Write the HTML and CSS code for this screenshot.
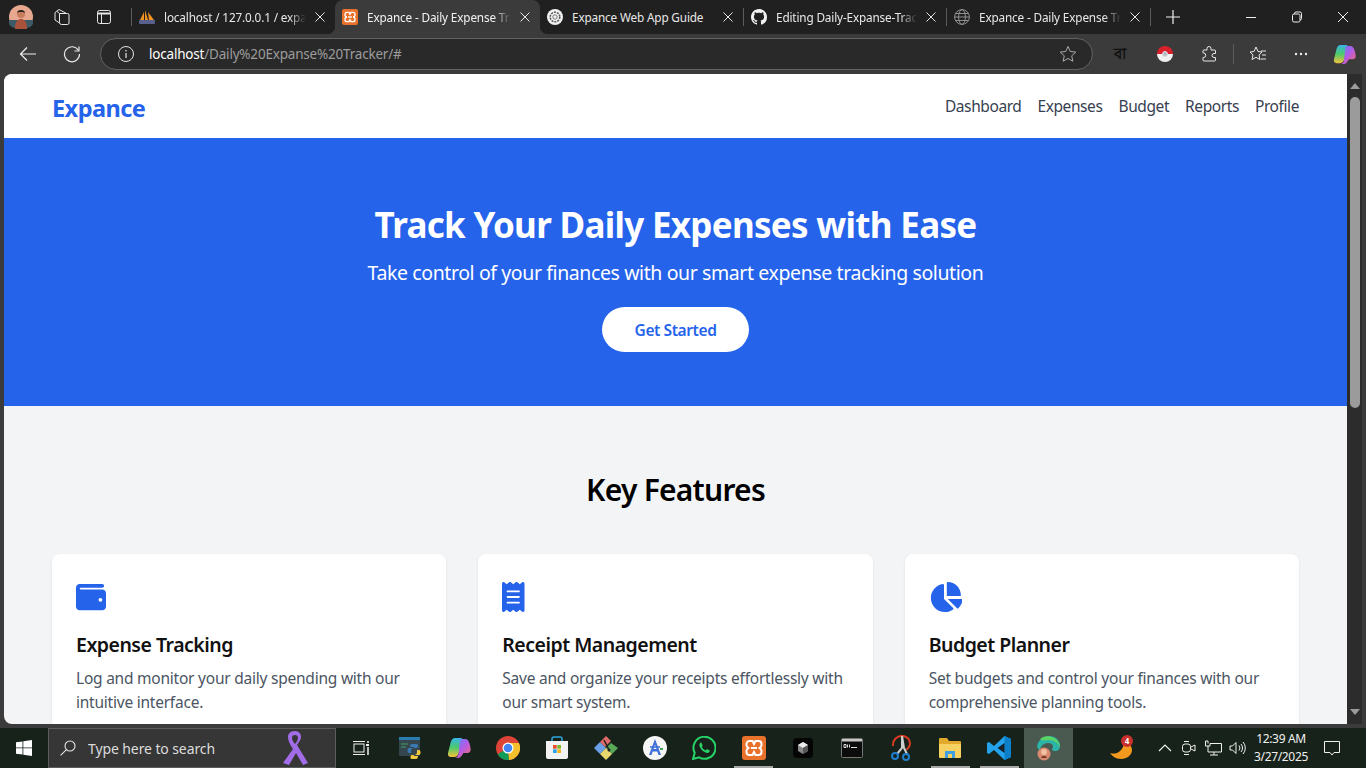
FILE: index.html
```html
<!DOCTYPE html>
<html lang="en">
<head>
<meta charset="utf-8">
<title>Expance - Daily Expense Tracker</title>
<link rel="stylesheet" href="styles.css">
</head>
<body>
<svg class="defs" width="0" height="0" aria-hidden="true">
  <symbol id="xampp" viewBox="0 0 24 24">
    <rect width="24" height="24" rx="3" fill="#e8712b"/>
    <path d="M7.500 5h3l1.500 3 1.500-3h3a3 3 0 0 1 3 3v.5a3 3 0 0 1-3 3.500 3 3 0 0 1 3 3.500v.5a3 3 0 0 1-3 3h-3L12 16l-1.500 3h-3a3 3 0 0 1-3-3v-.5a3 3 0 0 1 3-3.500 3 3 0 0 1-3-3.500V8a3 3 0 0 1 3-3z" fill="none" stroke="#fff" stroke-width="2"/>
    <path d="M9 12h6" stroke="#fff" stroke-width="2"/>
  </symbol>
  <linearGradient id="cpA" x1="0" y1="0" x2="1" y2="1"><stop offset="0" stop-color="#4f8cf5"/><stop offset=".5" stop-color="#b45be8"/><stop offset="1" stop-color="#f36b6a"/></linearGradient>
  <linearGradient id="cpB" x1="0" y1="0" x2="0" y2="1"><stop offset="0" stop-color="#37b4e8"/><stop offset=".5" stop-color="#4ccb6b"/><stop offset="1" stop-color="#f6c23c"/></linearGradient>
  <symbol id="copilot" viewBox="0 0 24 24">
    <path d="M8 2h7l-3 14c-.6 3-2 5-5 5H4c-2.500 0-3.500-2-3-4l2.500-10C4.200 4 5.500 2 8 2z" fill="url(#cpB)"/>
    <path d="M13 3h5c2.500 0 3.800 2 4.500 4.500l1 4.500c.6 3-.5 5-3 5h-4l-2 3c-1 1.500-2.500 2-4 2h-3c2.500 0 3.500-2 4-4z" fill="url(#cpA)"/>
  </symbol>
</svg>

<header class="tabbar">
  <div class="slot s42">
    <svg class="ico" width="24" height="24" viewBox="0 0 24 24"><circle cx="12" cy="12" r="12" fill="#e8a890"/><path d="M0 15h24v3a12 6 0 0 1-24 0z" fill="#3d5a66"/><circle cx="12" cy="9" r="4" fill="#c77c5c"/><path d="M8 8c0-4 8-4 8 0l-2-1h-4z" fill="#2a2020"/><path d="M6 24c0-8 3-10 6-10s6 2 6 10z" fill="#a8523c"/></svg>
  </div>
  <div class="slot s40">
    <svg width="18" height="18" viewBox="0 0 18 18" fill="none" stroke="#e6e6e6"><path d="M6.500 5.500h8a1.500 1.500 0 0 1 1.500 1.500v8a1.500 1.500 0 0 1-1.500 1.500h-6A2 2 0 0 1 6.500 14.500z"/><path d="M6.500 5.500 3.800 3.200 2 4.600v7.400l4.500 3M4 3l2-1.500 7.500 4"/></svg>
  </div>
  <div class="slot s44">
    <svg width="14" height="14" viewBox="0 0 14 14" fill="none" stroke="#e6e6e6"><rect x=".5" y=".5" width="13" height="13" rx="2"/><path d="M.5 3.500h13" stroke-width="2"/><path d="M4.500 3.500v10"/></svg>
  </div>
  <span class="sep first"></span>

  <div class="tab">
    <svg class="favicon" width="16" height="16" viewBox="0 0 16 16"><path d="M1 11 5 3v8zM6 11V1l3 10zM10 11 9 3l6 8z" fill="#f29222"/><rect y="11" width="16" height="4" rx="1" fill="#58608c"/></svg>
    <span class="tab-text">localhost / 127.0.0.1 / expance | phpMyAdmin</span>
    <svg class="close" width="16" height="16" viewBox="0 0 16 16"><path d="M3.500 3.500l9 9m0-9-9 9" stroke="#e6e6e6"/></svg>
  </div>
  <div class="tab active">
    <svg class="favicon" width="16" height="16"><use href="#xampp"/></svg>
    <span class="tab-text">Expance - Daily Expense Tracker</span>
    <svg class="close" width="16" height="16" viewBox="0 0 16 16"><path d="M3.500 3.500l9 9m0-9-9 9" stroke="#e6e6e6"/></svg>
  </div>
  <div class="tab">
    <svg class="favicon" width="16" height="16" viewBox="0 0 16 16"><circle cx="8" cy="8" r="8" fill="#f2f2f2"/><circle cx="8" cy="8" r="4.800" fill="none" stroke="#555" stroke-width="1.500" stroke-dasharray="2 1"/><circle cx="8" cy="8" r="2.200" fill="none" stroke="#777"/></svg>
    <span class="tab-text plain">Expance Web App Guide</span>
    <svg class="close" width="16" height="16" viewBox="0 0 16 16"><path d="M3.500 3.500l9 9m0-9-9 9" stroke="#e6e6e6"/></svg>
  </div>
  <span class="sep"></span>
  <div class="tab narrow">
    <svg class="favicon" width="16" height="16" viewBox="0 0 16 16"><path fill="#f2f2f2" d="M8 0C3.580 0 0 3.580 0 8c0 3.540 2.290 6.530 5.470 7.590.4.070.55-.17.55-.38 0-.19-.01-.82-.01-1.490-2.010.37-2.530-.49-2.690-.94-.09-.23-.48-.94-.82-1.130-.28-.15-.68-.52-.01-.53.630-.01 1.080.58 1.230.82.720 1.210 1.870.87 2.330.66.070-.52.28-.87.51-1.070-1.780-.2-3.640-.89-3.640-3.950 0-.87.310-1.590.820-2.150-.08-.2-.360-1.020.08-2.120 0 0 .67-.21 2.200.82.640-.18 1.320-.27 2-.27s1.360.09 2 .27c1.530-1.040 2.200-.82 2.200-.82.440 1.100.160 1.920.08 2.120.510.560.820 1.270.820 2.150 0 3.070-1.870 3.750-3.650 3.950.29.250.54.730.54 1.480 0 1.070-.01 1.930-.01 2.200 0 .210.150.460.550.380A8.010 8.010 0 0 0 16 8c0-4.420-3.580-8-8-8z"/></svg>
    <span class="tab-text">Editing Daily-Expanse-Tracker/README.md</span>
    <svg class="close" width="16" height="16" viewBox="0 0 16 16"><path d="M3.500 3.500l9 9m0-9-9 9" stroke="#e6e6e6"/></svg>
  </div>
  <span class="sep"></span>
  <div class="tab">
    <svg class="favicon" width="16" height="16" viewBox="0 0 16 16" fill="none" stroke="#9a9a9a" stroke-width=".9"><circle cx="8" cy="8" r="7.400"/><ellipse cx="8" cy="8" rx="3.400" ry="7.400"/><path d="M.6 8h14.800M1.600 4.500h12.800M1.600 11.500h12.800"/></svg>
    <span class="tab-text">Expance - Daily Expense Tracker</span>
    <svg class="close" width="16" height="16" viewBox="0 0 16 16"><path d="M3.500 3.500l9 9m0-9-9 9" stroke="#e6e6e6"/></svg>
  </div>
  <span class="sep"></span>
  <div class="slot new-tab">
    <svg width="16" height="16" viewBox="0 0 16 16"><path d="M8 1v14M1 8h14" stroke="#f0f0f0" stroke-width="1.200"/></svg>
  </div>
  <div class="grow"></div>
  <div class="slot s46"><svg width="12" height="12" viewBox="0 0 12 12"><path d="M1 6.500h10" stroke="#eee"/></svg></div>
  <div class="slot s46"><svg width="12" height="12" viewBox="0 0 12 12" fill="none" stroke="#eee"><rect x="1.500" y="3" width="7.500" height="8" rx="1.500"/><path d="M3.500 3V2.500a1.500 1.500 0 0 1 1.500-1.500h4a1.500 1.500 0 0 1 1.500 1.500v5a1.500 1.500 0 0 1-1.500 1.500"/></svg></div>
  <div class="slot s46"><svg width="12" height="12" viewBox="0 0 12 12"><path d="M1 1l10 10m0-10L1 11" stroke="#eee"/></svg></div>
</header>

<nav class="toolbar">
  <div class="slot s44 back">
    <svg width="18" height="16" viewBox="0 0 18 16" fill="none" stroke="#f0f0f0" stroke-width="1.200"><path d="M17 8H1.500M8 1.500 1.500 8 8 14.500"/></svg>
  </div>
  <div class="slot s44">
    <svg width="18" height="18" viewBox="0 0 18 18" fill="none" stroke="#e8e8e8" stroke-width="1.200"><path d="M15.500 5.500A7.500 7.500 0 1 0 16.500 9"/><path d="M16 1.500v4.500h-4.500"/></svg>
  </div>
  <div class="urlbar">
    <svg width="18" height="18" viewBox="0 0 18 18" fill="none" stroke="#e4e4e4"><circle cx="9" cy="9" r="7.500"/><path d="M9 8v5M9 5v1.500" stroke-width="1.200"/></svg>
    <span class="url"><span class="host">localhost</span>/Daily%20Expanse%20Tracker/#</span>
    <svg width="18" height="18" viewBox="0 0 18 18" fill="none" stroke="#a8a8a8"><path d="M9 1.500 11.300 6.500 16.800 7.100 12.700 10.800 13.900 16.300 9 13.500 4.100 16.300 5.300 10.800 1.200 7.100 6.700 6.500z"/></svg>
  </div>
  <div class="slot s445 ext-first"><span class="bangla" lang="bn">বা</span></div>
  <div class="slot s445">
    <svg width="16" height="16" viewBox="0 0 16 16"><path d="M0 8a8 8 0 0 1 16 0z" fill="#d8212a"/><path d="M0 8a8 8 0 0 0 16 0z" fill="#f0f0f0"/><circle cx="8" cy="8" r="2.500" fill="#b9b9c4" stroke="#ddd"/></svg>
  </div>
  <div class="slot s445">
    <svg width="16" height="16" viewBox="0 0 16 16" fill="none" stroke="#e8e8e8"><path d="M6 2.500a2 2 0 0 1 4 0V4h3.500a1 1 0 0 1 1 1v2.500H13a2 2 0 0 0 0 4h1.500V14a1 1 0 0 1-1 1H3a1 1 0 0 1-1-1v-2.500h.5a2.200 2.200 0 0 0 0-4.500H2V5a1 1 0 0 1 1-1h3z"/></svg>
  </div>
  <span class="tool-sep"></span>
  <div class="slot s43">
    <svg width="18" height="18" viewBox="0 0 18 18" fill="none" stroke="#e8e8e8"><path d="M7 2 9 6.500 13 7 10 10 10.800 14.500 7 12.300 3 14.500 4 10 1 7 5 6.500z"/><path d="M12 6h5M13 10h4M11.500 14H17"/></svg>
  </div>
  <div class="slot s43"><svg width="14" height="4" viewBox="0 0 14 4"><g fill="#eee"><circle cx="2" cy="2" r="1.200"/><circle cx="7" cy="2" r="1.200"/><circle cx="12" cy="2" r="1.200"/></g></svg></div>
  <div class="slot s43"><svg width="23" height="23"><use href="#copilot"/></svg></div>
</nav>

<div class="window">
  <main class="viewport">
    <div class="site-nav">
      <a class="brand" href="#">Expance</a>
      <div class="site-links">
        <a href="#">Dashboard</a>
        <a href="#">Expenses</a>
        <a href="#">Budget</a>
        <a href="#">Reports</a>
        <a href="#">Profile</a>
      </div>
    </div>
    <section class="hero">
      <h1>Track Your Daily Expenses with Ease</h1>
      <p>Take control of your finances with our smart expense tracking solution</p>
      <a class="cta" href="#">Get Started</a>
    </section>
    <section class="features">
      <h2>Key Features</h2>
      <div class="cards">
        <article class="card">
          <div class="card-icon"><svg width="30" height="30" viewBox="0 0 512 512"><path d="M64 32C28.700 32 0 60.700 0 96V416c0 35.300 28.700 64 64 64H448c35.300 0 64-28.700 64-64V192c0-35.300-28.700-64-64-64H80c-8.800 0-16-7.200-16-16s7.200-16 16-16H448c17.700 0 32-14.300 32-32s-14.300-32-32-32H64zM416 272a32 32 0 1 1 0 64 32 32 0 1 1 0-64z"/></svg></div>
          <h3>Expense Tracking</h3>
          <p>Log and monitor your daily spending with our intuitive interface.</p>
        </article>
        <article class="card">
          <div class="card-icon"><svg width="22.500" height="30" viewBox="0 0 384 512"><path d="M14 2.200C22.500-1.700 32.500-.3 39.600 5.800L80 40.400 120.400 5.800c9-7.700 22.300-7.700 31.200 0L192 40.400 232.400 5.800c9-7.700 22.200-7.700 31.200 0L304 40.400 344.400 5.800c7.100-6.100 17.100-7.500 25.600-3.600s14 12.400 14 21.800V488c0 9.400-5.500 17.900-14 21.800s-18.500 2.500-25.600-3.600L304 471.600l-40.400 34.600c-9 7.700-22.300 7.700-31.200 0L192 471.600l-40.400 34.600c-9 7.700-22.200 7.700-31.200 0L80 471.600 39.600 506.200c-7.100 6.100-17.100 7.500-25.600 3.600S0 497.400 0 488V24C0 14.600 5.500 6.100 14 2.200zM96 144c-8.800 0-16 7.200-16 16s7.200 16 16 16H288c8.800 0 16-7.200 16-16s-7.200-16-16-16H96zM80 352c0 8.800 7.200 16 16 16H288c8.800 0 16-7.200 16-16s-7.200-16-16-16H96c-8.800 0-16 7.200-16 16zM96 240c-8.800 0-16 7.200-16 16s7.200 16 16 16H288c8.800 0 16-7.200 16-16s-7.200-16-16-16H96z"/></svg></div>
          <h3>Receipt Management</h3>
          <p>Save and organize your receipts effortlessly with our smart system.</p>
        </article>
        <article class="card">
          <div class="card-icon"><svg width="33.750" height="30" viewBox="0 0 576 512"><path d="M304 240V16.600c0-9 7-16.600 16-16.600C443.700 0 544 100.300 544 224c0 9-7.600 16-16.600 16H304zM32 272C32 150.700 122.100 50.300 239 34.300c9.200-1.300 17 6.100 17 15.400V288L412.500 444.500c6.700 6.700 6.200 17.700-1.500 23.100C371.800 495.600 323.800 512 272 512C139.500 512 32 404.600 32 272zm526.400 16c9.300 0 16.600 7.800 15.400 17c-7.700 55.900-34.600 105.600-73.900 142.300c-6 5.600-15.400 5.200-21.200-.7L320 288H558.400z"/></svg></div>
          <h3>Budget Planner</h3>
          <p>Set budgets and control your finances with our comprehensive planning tools.</p>
        </article>
      </div>
    </section>
  </main>
  <aside class="scrollbar">
    <span class="arrow up"></span>
    <span class="thumb"></span>
    <span class="grow"></span>
    <span class="arrow down"></span>
  </aside>
</div>

<footer class="taskbar">
  <div class="slot start">
    <svg width="16" height="16" viewBox="0 0 16 16" fill="#fff"><path d="M0 2.300 6.500 1.400v6.100H0zM7.300 1.300 16 0v7.500H7.300zM0 8.300h6.500v6.300L0 13.700zM7.300 8.300H16V16l-8.700-1.300z"/></svg>
  </div>
  <div class="search">
    <svg width="16" height="16" viewBox="0 0 16 16" fill="none" stroke="#e6e6e6" stroke-width="1.100"><circle cx="10" cy="6" r="5"/><path d="M6.400 9.600.6 15.400"/></svg>
    <span class="search-text">Type here to search</span>
    <svg class="ribbon" width="26" height="36" viewBox="0 0 26 36"><path d="M13 1c-5 0-7 3-7 6 0 4 3 9 5 12L1 33l6 2 7-12 7 12 5-2-11-18c2-3 4-6 4-8 0-3-2-6-6-6zm0 4c2 0 3 1 3 3 0 1-1 4-3 6-2-2-3-5-3-6 0-2 1-3 3-3z" fill="#a26ce8"/></svg>
  </div>
  <div class="slot task-view">
    <svg width="16" height="16" viewBox="0 0 16 16" fill="none" stroke="#f0f0f0"><rect x="1" y="4" width="10" height="8"/><path d="M0 1.500h12M0 14.500h12"/><path d="M15 1v2M15 7v8" stroke-width="1.500"/><rect x="13.500" y="4.500" width="2" height="1" fill="#f0f0f0"/></svg>
  </div>
  <div class="slot app">
    <svg width="24" height="24" viewBox="0 0 24 24"><rect x="1" y="1" width="21" height="19" rx="1.500" fill="#36464e"/><rect x="1" y="1" width="21" height="3" fill="#2a7db0"/><path d="M3 8h7M3 11h5" stroke="#3fa060"/><path d="M15 8c-3 0-3 1.500-3 3h4v1h-5c-2 0-2 5 0 5h2v-2c0-2 1-3 3-3h2c1.500 0 2-1 2-2v-1c0-1-1.500-1-5-1z" fill="#3a78b0"/><path d="M17 23c3 0 3-1.500 3-3h-4v-1h5c2 0 2-5 0-5h-2v2c0 2-1 3-3 3h-2c-1.500 0-1.500 1-1.500 2v1c0 1 1.500 1 4.500 1z" fill="#f2c93c"/></svg>
  </div>
  <div class="slot app"><svg width="24" height="24"><use href="#copilot"/></svg></div>
  <div class="slot app">
    <svg width="24" height="24" viewBox="0 0 24 24"><circle cx="12" cy="12" r="12" fill="#db4437"/><path d="M12 12 1.700 18.200A12 12 0 0 0 13 24z" fill="#0f9d58"/><path d="M12 7h11a12 12 0 0 1-10 17z" fill="#f6c02c"/><circle cx="12" cy="12" r="5.500" fill="#fff"/><circle cx="12" cy="12" r="4.300" fill="#4285f4"/></svg>
  </div>
  <div class="slot app">
    <svg width="24" height="24" viewBox="0 0 24 24"><path d="M7 5V3c0-1 1-2 2-2h6c1 0 2 1 2 2v2" fill="none" stroke="#2fa8e0" stroke-width="1.500"/><path d="M1 5h22v16a2 2 0 0 1-2 2H3a2 2 0 0 1-2-2z" fill="#f2f2f2"/><rect x="8" y="9" width="3.700" height="3.700" fill="#e8502a"/><rect x="12.300" y="9" width="3.700" height="3.700" fill="#7cb82a"/><rect x="8" y="13.300" width="3.700" height="3.700" fill="#2aa4e8"/><rect x="12.300" y="13.300" width="3.700" height="3.700" fill="#f5b41f"/></svg>
  </div>
  <div class="slot app">
    <svg width="24" height="24" viewBox="0 0 24 24"><path d="M0 12 6 6l6 6-6 6z" fill="#6aa0e8"/><path d="M6 6l6-6 5 5-6 6z" fill="#e06a6a"/><path d="M12 12l5-5 7 5-6 6z" fill="#58a858"/><path d="M6 18l6-6 6 6-6 6z" fill="#e8d870"/><path d="M10 4l5 10" stroke="#222" stroke-width="1.500"/><circle cx="15" cy="14" r="1.500" fill="#222"/></svg>
  </div>
  <div class="slot app">
    <svg width="24" height="24" viewBox="0 0 24 24"><circle cx="12" cy="12" r="12" fill="#f6f6f6"/><path d="M12 3 6 19h2.500l1.200-3.500h4.600L15.500 19H18zM10.500 13 12 8.500 13.500 13z" fill="#3f6fd8"/><path d="M7 11h10" stroke="#3f6fd8" stroke-width="1.500"/><rect x="17" y="12" width="3" height="2" fill="#3ba55c"/></svg>
  </div>
  <div class="slot app">
    <svg width="24" height="24" viewBox="0 0 24 24" fill="none"><path d="M1 23 2.700 16.800A11 11 0 1 1 7 21.300z" stroke="#25d366" stroke-width="2"/><path d="M8.500 6.800c-1.300 1-1.500 2.600-.5 4.500 1.200 2.400 3 4.200 5.500 5.300 1.800.8 3.200.5 4-.8.400-.7.300-1.200-.2-1.500l-2-1c-.5-.2-.8 0-1.100.4l-.6.700c-1.800-.7-3-1.900-3.800-3.600l.6-.7c.3-.4.300-.7.100-1.100l-.9-2c-.3-.6-.9-.7-1.400-.3z" fill="#25d366"/></svg>
  </div>
  <div class="slot app active-app"><svg width="24" height="24"><use href="#xampp"/></svg></div>
  <div class="slot app">
    <svg width="20" height="20" viewBox="0 0 20 20"><rect width="20" height="20" rx="4" fill="#050505"/><path d="M10 4l5 3v6l-5 3-5-3V7z" fill="#888"/><path d="M10 4l5 3-5 3-5-3z" fill="#eee"/><path d="M10 10l5-3v6l-5 3z" fill="#555"/></svg>
  </div>
  <div class="slot app">
    <svg width="22" height="20" viewBox="0 0 22 20"><rect x=".5" y=".5" width="21" height="19" rx="1" fill="#0c0c0c" stroke="#777"/><rect x="1" y="1" width="20" height="2.500" fill="#c8c8c8"/><path d="M3 6.500h2v3H3zM6.500 6.500v3M8.500 6.500v3M10 9.500h6" stroke="#ddd" fill="none"/></svg>
  </div>
  <div class="slot app">
    <svg width="24" height="26" viewBox="0 0 24 26" fill="none"><path d="M4 11A9 9 0 0 1 14 1c5 .5 8 5 6.500 10l-3 4" stroke="#d83c20" stroke-width="2"/><path d="M13 1v12l-5 6M13 1l2 12 3 6" stroke="#cfcfcf" stroke-width="2"/><circle cx="6" cy="21" r="3" stroke="#1f80d0" stroke-width="2"/><circle cx="17" cy="22" r="3" stroke="#1f80d0" stroke-width="2"/></svg>
  </div>
  <div class="slot app active-app">
    <svg width="24" height="22" viewBox="0 0 24 22"><path d="M1 2a1 1 0 0 1 1-1h7l2 3h11a1 1 0 0 1 1 1v3H1z" fill="#e3a92d"/><path d="M1 7h22v13a1 1 0 0 1-1 1H2a1 1 0 0 1-1-1z" fill="#f7d262"/><path d="M7 21v-7h10v7h-3v-4h-4v4z" fill="#3f9fe0"/></svg>
  </div>
  <div class="slot app active-app">
    <svg width="24" height="24" viewBox="0 0 24 24"><path d="M17.500 0 24 3v18l-6.500 3L7 14 2 18l-2-1V7l2-1 5 4z" fill="#23a3ec"/><path d="M17.500 0 24 3v18l-6.500 3z" fill="#0d7fc9"/><path d="M17.500 7v10L10.500 12z" fill="#17212b"/></svg>
  </div>
  <div class="slot app edge">
    <svg width="24" height="25" viewBox="0 0 24 25"><path d="M1 11C2 4 7 0 13 0c6 0 11 4 11 10 0 3-2 5-5 5-2 0-3-1-3-2 2-2 1-6-4-6-5 0-8 4-8 8z" fill="#2cb4a8"/><path d="M4 3c3-3 9-4 14-1 4 2 6 6 6 9-2-4-6-7-11-7-4 0-7 1-9-1z" fill="#5ad264"/><circle cx="8" cy="18" r="6.500" fill="#d88a70"/><circle cx="8" cy="16" r="3" fill="#f0c0a0"/><path d="M5 22c1-3 5-3 6 0z" fill="#7a3a2c"/></svg>
  </div>
  <div class="grow"></div>
  <div class="slot tray-wide">
    <svg class="crescent" width="24" height="24" viewBox="0 0 24 24"><path d="M1 15c5 1.500 10 0 13-6l1-6c5 2 8 5 8 9 0 5-5 9-11 9-5 0-9-3-11-6z" fill="#f39a1e"/></svg>
    <span class="badge">4</span>
  </div>
  <div class="slot tray"><svg width="14" height="8" viewBox="0 0 14 8" fill="none" stroke="#f0f0f0" stroke-width="1.200"><path d="M1 7l6-6 6 6"/></svg></div>
  <div class="slot tray"><svg width="14" height="16" viewBox="0 0 14 16" fill="none" stroke="#f0f0f0"><rect x=".5" y="4" width="8" height="8" rx="2.500"/><path d="M9 7l4-2v6l-4-2M2 1.500h5M2 14.500h5"/></svg></div>
  <div class="slot tray"><svg width="17" height="16" viewBox="0 0 17 16" fill="none" stroke="#f0f0f0"><path d="M3 3.500V1H.5v5H5V3.500h11.500V12H3V6M9 12v3M5 15h8"/></svg></div>
  <div class="slot tray"><svg width="17" height="14" viewBox="0 0 17 14" fill="none" stroke="#f0f0f0"><path d="M1 5h2.500L7 1.500v11L3.500 9H1zM10 4.500a4 4 0 0 1 0 5M12 3a6.500 6.500 0 0 1 0 8M14 1a9 9 0 0 1 0 12"/></svg></div>
  <div class="clock"><span>12:39 AM</span><span>3/27/2025</span></div>
  <div class="slot notify"><svg width="16" height="15" viewBox="0 0 16 15" fill="none" stroke="#f0f0f0"><path d="M.5.500h15v11h-5.500L8 14l-2-2.500H.5z"/></svg></div>
  <div class="desktop-peek"></div>
</footer>
</body>
</html>
```

FILE: styles.css
```css
* { box-sizing: border-box; }
html, body { margin: 0; height: 100%; }
body {
  width: 1366px; height: 768px; overflow: hidden;
  display: flex; flex-direction: column;
  background: #3b3b3b;
  font-family: "Noto Sans", "Open Sans", "Liberation Sans", sans-serif;
}
a { text-decoration: none; color: inherit; }
.defs { display: block; height: 0; }
.grow { flex: 1; }
.slot { display: flex; align-items: center; justify-content: center; flex: none; position: relative; }
.s42 { width: 42px; } .s40 { width: 40px; } .s44 { width: 44px; } .s46 { width: 46px; height: 100%; }
.s445 { width: 44.5px; } .s43 { width: 43px; }

/* tab strip */
.tabbar { height: 34px; flex: none; display: flex; align-items: stretch; background: #202020; }
.sep { width: 1px; height: 18px; align-self: center; background: #5c5c5c; flex: none; }
.sep.first { margin-left: 5px; }
.tab {
  width: 203px; flex: none; display: flex; align-items: center; padding: 0 7px;
  position: relative; color: #e8e8e8; font-size: 11.750px;
}
.tab.narrow { width: 202px; }
.tab.active { width: 205px; background: #3b3b3b; border-radius: 8px 8px 0 0; color: #f2f2f2; }
.tab.active::before, .tab.active::after {
  content: ""; position: absolute; bottom: 0; width: 8px; height: 8px;
}
.tab.active::before { left: -8px; background: radial-gradient(circle at 0 0, transparent 8px, #3b3b3b 8.5px); }
.tab.active::after { right: -8px; background: radial-gradient(circle at 100% 0, transparent 8px, #3b3b3b 8.5px); }
.favicon { flex: none; margin-right: 9px; }
.tab-text {
  flex: 1; min-width: 0; white-space: nowrap; overflow: hidden; letter-spacing: -.15px;
  -webkit-mask-image: linear-gradient(to right, #000 88%, transparent 100%);
  mask-image: linear-gradient(to right, #000 88%, transparent 100%);
}
.tab-text.plain { -webkit-mask-image: none; mask-image: none; }
.close { flex: none; margin-left: 6px; }
.new-tab { width: 44px; }

/* toolbar */
.toolbar { height: 40px; flex: none; display: flex; align-items: center; background: #3b3b3b; padding-left: 6px; }
.urlbar {
  width: 993px; height: 32px; margin-left: 6px; flex: none; display: flex; align-items: center;
  background: #292929; border: 1px solid #626262; border-radius: 16px; padding: 0 15px 0 16px;
}
.url { flex: 1; margin-left: 14px; font-size: 13.500px; color: #9c9c9c; letter-spacing: -.2px; }
.host { color: #fff; }
.ext-first { margin-left: 5px; }
.bangla { font-size: 15px; font-weight: 700; color: #111; }
.tool-sep { width: 1px; height: 20px; background: #5c5c5c; margin: 0 2.500px 0 1.500px; flex: none; }

/* browser viewport */
.window { height: 650px; flex: none; display: flex; padding: 0 4px; }
.viewport { width: 1343px; flex: none; overflow: hidden; background: #f3f4f6; border-radius: 8px 0 0 8px; }
.scrollbar { width: 15px; flex: none; background: #2c2c2c; display: flex; flex-direction: column; align-items: center; }
.arrow { width: 0; height: 0; border-left: 5px solid transparent; border-right: 5px solid transparent; flex: none; }
.arrow.up { border-bottom: 6px solid #9b9b9b; margin: 9px 0 8px; }
.arrow.down { border-top: 6px solid #9b9b9b; margin: 8px 0 9px; }
.thumb { width: 10px; height: 311px; background: #9b9b9b; border-radius: 5px; flex: none; }

/* site */
.site-nav {
  height: 64px; background: #fff; display: flex; align-items: center; justify-content: space-between;
  padding: 0 48px;
}
.brand { font-size: 23.500px; font-weight: 700; color: #2563eb; letter-spacing: -.55px; padding-top: 3px; }
.site-links { display: flex; gap: 16px; font-size: 15.500px; color: #374151; letter-spacing: -.41px; }
.hero { height: 268px; background: #2563eb; color: #fff; text-align: center; padding-top: 64px; }
.hero h1 { margin: 0; font-size: 35px; line-height: 46px; font-weight: 700; letter-spacing: -.7px; }
.hero p { margin: 11px 0 20px; font-size: 19.500px; line-height: 28px; letter-spacing: -.4px; }
.cta {
  display: inline-block; width: 147px; height: 45px; line-height: 46px; background: #fff; color: #2563eb;
  border-radius: 23px; font-size: 15.500px; font-weight: 600; letter-spacing: -.4px;
}
.features { padding: 64px 48px 0; }
.features h2 { margin: 0 0 44px; text-align: center; font-size: 30px; line-height: 40px; font-weight: 600; color: #000; letter-spacing: -.75px; }
.cards { display: grid; grid-template-columns: repeat(3, 1fr); gap: 32px; }
.card { background: #fff; border-radius: 8px; padding: 24px; box-shadow: 0 1px 3px rgba(0,0,0,.08); }
.card-icon { height: 38px; display: flex; align-items: center; margin-bottom: 15px; }
.card-icon svg { fill: #2563eb; }
.card h3 { margin: 0 0 7px; font-size: 19.500px; line-height: 28px; font-weight: 600; color: #111; letter-spacing: -.5px; }
.card p { margin: 0; font-size: 15.500px; line-height: 24px; color: #4b5563; letter-spacing: -.23px; }

/* taskbar */
.taskbar {
  height: 40px; flex: none; margin-top: 4px; display: flex; align-items: stretch; background: #17221a; color: #f0f0f0;
}
.start { width: 48px; }
.search {
  width: 288px; flex: none; display: flex; align-items: center; padding-left: 11px;
  background: #363636; border: 1px solid #5c5c5c;
}
.search-text { margin-left: 12px; font-size: 14px; color: #dcdcdc; letter-spacing: -.1px; flex: 1; }
.ribbon { margin-right: 27px; }
.task-view { width: 49px; }
.app { width: 49.150px; }
.active-app::after {
  content: ""; position: absolute; bottom: 0; left: 5px; right: 5px; height: 2px; background: #a8a8a8;
}
.edge { background: #4b5a50; }
.tray-wide { width: 48px; margin-right: 8px; }
.crescent { position: relative; top: 2px; }
.badge {
  position: absolute; top: 7px; left: 24px; width: 12px; height: 12px; border-radius: 50%;
  background: #c9302c; color: #fff; font-size: 8px; line-height: 12px; text-align: center; font-weight: 700;
}
.tray { width: 24px; }
.clock {
  width: 64px; flex: none; display: flex; flex-direction: column; align-items: center; justify-content: center;
  font-size: 12px; line-height: 18px; letter-spacing: -.35px; white-space: nowrap;
}
.notify { width: 38px; }
.desktop-peek { width: 15px; flex: none; }
```
